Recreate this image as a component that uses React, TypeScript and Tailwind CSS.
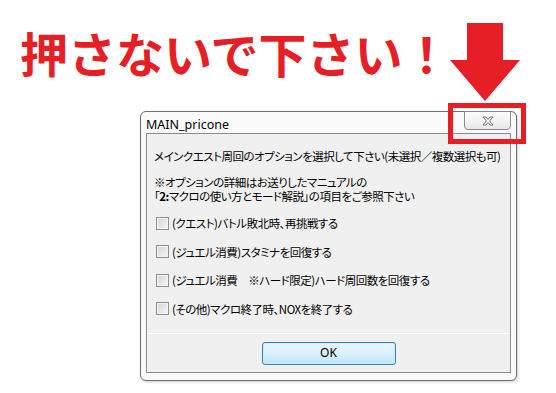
import React from 'react';

const jp = "font-['Noto_Sans_CJK_JP',sans-serif]";

const Checkbox = () => (
  <span className="box-border h-[13px] w-[13px] shrink-0 border border-[#8e8f8f] bg-gradient-to-br from-[#d4d4d4] to-[#f7f7f7] shadow-[inset_0_0_0_1px_#f3f3f3]" />
);

const CloseGlyph = () => (
  <svg width="12" height="10" viewBox="0 0 12 10">
    <path
      d="M1 1 H4 L6 3.4 L8 1 H11 L7.6 5 L11 9 H8 L6 6.6 L4 9 H1 L4.4 5 Z"
      fill="#ffffff"
      stroke="#767676"
      strokeWidth="1"
      strokeLinejoin="round"
    />
  </svg>
);

const Arrow = () => (
  <svg width="70" height="78" viewBox="0 0 70 78" className="shrink-0">
    <polygon points="17,0 53,0 53,37 70,37 35,78 0,37 17,37" fill="#e61e25" />
  </svg>
);

const options = [
  '(クエスト)バトル敗北時、再挑戦する',
  '(ジュエル消費)スタミナを回復する',
  '(ジュエル消費　※ハード限定)ハード周回数を回復する',
  '(その他)マクロ終了時、NOXを終了する',
];

export default function App() {
  return (
    <div className="relative h-[393px] w-[556px] overflow-hidden bg-white">
      <div className="flex items-start pt-[23px]">
        <h1
          className={`${jp} ml-[20px] mt-[5px] w-[430px] whitespace-nowrap text-[48px] font-bold leading-[48px] text-[#e61e25]`}
        >
          押さないで下さい！
        </h1>
        <Arrow />
      </div>

      <div className="ml-[140px] mt-[10px] flex h-[270px] w-[377px] flex-col rounded-[6px] border border-[#6f6f6f] bg-[#fafafa] shadow-[1px_1px_3px_rgba(0,0,0,0.2)]">
        <div className="flex h-[21px] shrink-0 items-start justify-between pl-[5px] pr-[5px]">
          <span className="mt-[5px] font-['Noto_Sans',sans-serif] text-[12.5px] leading-[16px] text-black">
            MAIN_pricone
          </span>
          <button className="-mt-px flex h-[19px] w-[47px] items-center justify-center rounded-b-[4px] border border-[#8a8a8a] bg-gradient-to-b from-[#fdfdfd] to-[#e8e8e8]">
            <CloseGlyph />
          </button>
        </div>

        <div className="mx-[5px] mb-[7px] flex flex-1 flex-col border border-[#8c8c8c] bg-[#f0f0f0]">
          <div
            className={`${jp} flex flex-1 flex-col whitespace-nowrap pt-[16px] text-[11.5px] tracking-[-0.5px] text-black [font-feature-settings:'palt']`}
          >
            <div className="pl-[7px]">
              <p className="leading-[13px]">
                メインクエスト周回のオプションを選択して下さい(未選択／複数選択も可)
              </p>
              <div className="mt-[12px] leading-[14px]">
                <p>※オプションの詳細はお送りしたマニュアルの</p>
                <p>
                  「<span className="font-bold">2:</span>マクロの使い方とモード解説」の項目をご参照下さい
                </p>
              </div>
            </div>
            <div className="mt-[12px] flex flex-col gap-[12.5px] pl-[9px]">
              {options.map((label) => (
                <label key={label} className="flex h-[16px] items-center gap-[3px] leading-[16px]">
                  <Checkbox />
                  <span>{label}</span>
                </label>
              ))}
            </div>
          </div>
          <div className="flex h-[39px] shrink-0 items-center justify-center border-t border-white">
            <button className="box-border h-[23px] w-[134px] rounded-[3px] border border-[#3c7fb1] bg-gradient-to-b from-[#eaf6fd] via-[#d9f0fc] to-[#bee6fd] font-['Noto_Sans',sans-serif] text-[12px] text-black shadow-[inset_0_0_0_1px_#c8ecfc]">
              OK
            </button>
          </div>
        </div>
      </div>

      <div className="absolute left-[448px] top-[103px] h-[41px] w-[78px] border-[5px] border-[#e61e25]" />
    </div>
  );
}
